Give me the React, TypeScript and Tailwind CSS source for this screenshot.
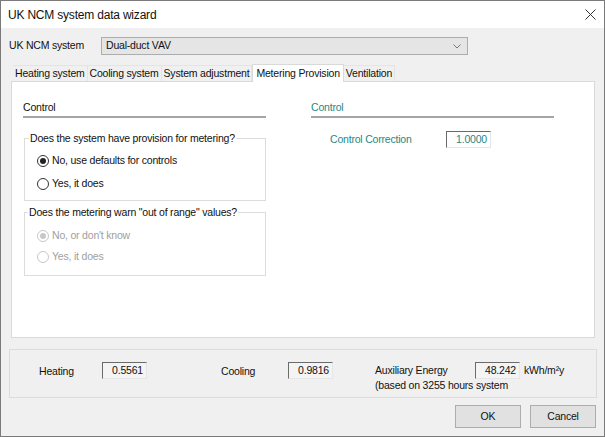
import React from 'react';

const font = { fontFamily: '"Liberation Sans", Arial, sans-serif' };

function Radio({ checked, disabled, label }: { checked?: boolean; disabled?: boolean; label: string }) {
  return (
    <div className={`flex items-center h-[20px] ${disabled ? 'text-[#a0a0a0]' : 'text-[#111]'}`}>
      <span
        className={`w-[12px] h-[12px] rounded-full border flex items-center justify-center bg-white ${
          disabled ? 'border-[#c8c8c8]' : 'border-[#333]'
        }`}
      >
        {checked && <span className={`w-[6px] h-[6px] rounded-full ${disabled ? 'bg-[#c8c8c8]' : 'bg-[#222]'}`} />}
      </span>
      <span className="ml-[3px]">{label}</span>
    </div>
  );
}

function ValueBox({ value, w, white, teal }: { value: string; w: string; white?: boolean; teal?: boolean }) {
  return (
    <div
      className={`${w} h-[17px] border-t border-l border-t-[#6a6a6a] border-l-[#6a6a6a] border-r border-b border-r-[#e6e6e6] border-b-[#e6e6e6] flex items-center justify-end pr-[3px] ${
        white ? 'bg-white' : 'bg-[#f4f4f4]'
      } ${teal ? 'text-[#1f8784]' : 'text-[#111]'}`}
    >
      {value}
    </div>
  );
}

export default function App() {
  const tabs = ['Heating system', 'Cooling system', 'System adjustment', 'Metering Provision', 'Ventilation'];
  return (
    <div style={font} className="w-[605px] h-[437px] bg-[#f0f0f0] border border-[#7a7a7a] flex flex-col text-[10.5px] tracking-[-0.2px] text-[#111] overflow-hidden whitespace-nowrap">
      {/* title bar */}
      <div className="h-[27px] bg-white flex items-center pl-[7px] pr-[8px] shrink-0">
        <span className="text-[12px]">UK NCM system data wizard</span>
        <span className="ml-auto text-[#333]">
          <svg width="11" height="11" viewBox="0 0 11 11">
            <path d="M0.5 0.5L10.5 10.5M10.5 0.5L0.5 10.5" stroke="#333" strokeWidth="1" />
          </svg>
        </span>
      </div>

      {/* system select */}
      <div className="flex items-center mt-[9px] h-[18px]">
        <span className="pl-[8px] w-[100px]">UK NCM system</span>
        <div className="w-[367px] h-[18px] bg-[#e5e5e5] border border-[#adadad] flex items-center pl-[4px] pr-[6px]">
          <span>Dual-duct VAV</span>
          <svg className="ml-auto" width="8" height="5" viewBox="0 0 8 5">
            <path d="M0.5 0.5L4 4L7.5 0.5" stroke="#777" strokeWidth="1" fill="none" />
          </svg>
        </div>
      </div>

      {/* tabs */}
      <div className="flex items-end ml-[12px] mt-[8px] h-[18px]">
        {tabs.map((t) =>
          t === 'Metering Provision' ? (
            <div key={t} className="h-[18px] px-[3px] bg-white border border-b-0 border-[#d9d9d9] flex items-center -mb-px z-10">
              {t}
            </div>
          ) : (
            <div key={t} className="h-[16px] px-[2px] flex items-center border-t border-r border-[#e4e4e4] bg-[#f0f0f0]">
              {t}
            </div>
          )
        )}
      </div>

      {/* tab panel */}
      <div className="ml-[10px] w-[584px] h-[257px] bg-white border border-[#d9d9d9] flex">
        <div className="w-[287px] pl-[11px] pt-[16px]">
          <div className="w-[243px]">
            <div className="h-[18px] leading-[18px]">Control</div>
            <div className="h-[2px] bg-[#a5a5a5]" />
          </div>

          <div className="relative mt-[20px] ml-[1px] w-[242px] h-[63px] border border-[#dcdcdc]">
            <span className="absolute -top-[9px] left-[4px] bg-white px-[1px] leading-[16px]">
              Does the system have provision for metering?
            </span>
            <div className="pl-[12px] pt-[12px] flex flex-col gap-[3px]">
              <Radio checked label="No, use defaults for controls" />
              <Radio label="Yes, it does" />
            </div>
          </div>

          <div className="relative mt-[11px] ml-[1px] w-[242px] h-[64px] border border-[#dcdcdc]">
            <span className="absolute -top-[9px] left-[3px] bg-white px-[1px] leading-[16px]">
              Does the metering warn "out of range" values?
            </span>
            <div className="pl-[12px] pt-[13px] flex flex-col gap-[1px]">
              <Radio checked disabled label="No, or don't know" />
              <Radio disabled label="Yes, it does" />
            </div>
          </div>
        </div>

        <div className="pl-[12px] pt-[16px] text-[#1f8784]">
          <div className="w-[243px]">
            <div className="h-[18px] leading-[18px]">Control</div>
            <div className="h-[2px] bg-[#a5a5a5]" />
          </div>
          <div className="flex items-center mt-[13px] ml-[19px]">
            <span className="w-[116px]">Control Correction</span>
            <ValueBox value="1.0000" w="w-[45px]" white teal />
          </div>
        </div>
      </div>

      {/* results group */}
      <div className="ml-[8px] mt-[11px] w-[588px] h-[49px] border border-[#dcdcdc] flex pt-[12px]">
        <div className="flex items-start">
          <span className="ml-[29px] w-[63px] mt-[2px]">Heating</span>
          <ValueBox value="0.5561" w="w-[45px]" />
        </div>
        <div className="flex items-start">
          <span className="ml-[74px] w-[67px] mt-[2px]">Cooling</span>
          <ValueBox value="0.9816" w="w-[45px]" />
        </div>
        <div className="flex flex-col ml-[42px]">
          <div className="flex items-start">
            <span className="w-[100px] mt-[1px]">Auxiliary Energy</span>
            <ValueBox value="48.242" w="w-[45px]" />
            <span className="ml-[4px] mt-[1px]">kWh/m²y</span>
          </div>
          <span className="mt-[-1px]">(based on 3255 hours system</span>
        </div>
      </div>

      {/* buttons */}
      <div className="flex justify-end gap-[9px] mt-[7px] pr-[8px]">
        <button className="w-[66px] h-[23px] bg-[#e1e1e1] border border-[#adadad]">OK</button>
        <button className="w-[66px] h-[23px] bg-[#e1e1e1] border border-[#adadad]">Cancel</button>
      </div>
    </div>
  );
}
